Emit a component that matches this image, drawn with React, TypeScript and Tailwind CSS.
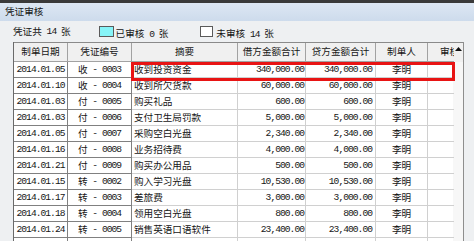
import React from "react";

const CJK = "font-['Noto_Sans_CJK_SC','Noto_Sans_CJK_JP',sans-serif] text-[9.6px]";
const MONO = "font-['Liberation_Mono',monospace] text-[9.6px] tracking-[-0.96px] whitespace-pre";

function T({ s }: { s: string }) {
  const parts = s.match(/[\u0000-\u00ff]+|[^\u0000-\u00ff]+/g) ?? [];
  return (
    <>
      {parts.map((p, i) =>
        /^[\u0000-\u00ff]/.test(p) ? (
          <span key={i} className={MONO}>
            {p}
          </span>
        ) : (
          <span key={i} className={CJK}>
            {p}
          </span>
        )
      )}
    </>
  );
}

type Row = [string, string, string, string, string, string];

const rows: Row[] = [
  ["2014.01.05", "收 - 0003", "收到投资资金", "340,000.00", "340,000.00", "李明"],
  ["2014.01.10", "收 - 0004", "收到所欠货款", "60,000.00", "60,000.00", "李明"],
  ["2014.01.03", "付 - 0005", "购买礼品", "600.00", "600.00", "李明"],
  ["2014.01.03", "付 - 0006", "支付卫生局罚款", "5,000.00", "5,000.00", "李明"],
  ["2014.01.05", "付 - 0007", "采购空白光盘", "2,340.00", "2,340.00", "李明"],
  ["2014.01.16", "付 - 0008", "业务招待费", "4,000.00", "4,000.00", "李明"],
  ["2014.01.21", "付 - 0009", "购买办公用品", "500.00", "500.00", "李明"],
  ["2014.01.15", "转 - 0002", "购入学习光盘", "10,530.00", "10,530.00", "李明"],
  ["2014.01.17", "转 - 0003", "差旅费", "3,000.00", "3,000.00", "李明"],
  ["2014.01.18", "转 - 0004", "领用空白光盘", "800.00", "800.00", "李明"],
  ["2014.01.24", "转 - 0005", "销售英语口语软件", "23,400.00", "23,400.00", "李明"],
  ["", "", "", "", "", ""],
];

const headers = ["制单日期", "凭证编号", "摘要", "借方金额合计", "贷方金额合计", "制单人"];
const widths = ["w-[54px]", "w-[64px]", "w-[106px]", "w-[68px]", "w-[70px]", "w-[52px]"];

export default function App() {
  return (
    <div className="w-[474px] h-[241px] overflow-hidden bg-[#eef0f2] text-[#161616] flex flex-col leading-none">
      {/* title bar */}
      <div className="h-[21px] shrink-0 border-t-[3px] border-[#3a3a3a] bg-gradient-to-b from-[#dde7f3] to-[#cddbec] flex items-center pl-[5px]">
        <T s="凭证审核" />
      </div>

      {/* info row */}
      <div className="h-[21px] shrink-0 flex items-center pl-[13px]">
        <T s="凭证共 14 张" />
        <div className="ml-[28px] w-[15px] h-[11px] bg-[#86f4f8] border border-[#5a5a5a]" />
        <div className="ml-[2px]">
          <T s="已审核 0 张" />
        </div>
        <div className="ml-[32px] w-[13px] h-[11px] bg-white border border-[#5a5a5a]" />
        <div className="ml-[3px]">
          <T s="未审核 14 张" />
        </div>
      </div>

      {/* table area */}
      <div className="flex pl-[13px]">
        <div className="relative w-[440px] border-l border-[#6a6a6a]">
          {/* header */}
          <div className="flex h-[20px] border-t border-[#8a8a8a]">
            {headers.map((h, i) => (
              <div
                key={i}
                className={`${widths[i]} shrink-0 h-full bg-[#f0f0f0] border-r border-b border-[#a2a2a2] flex items-center justify-center overflow-hidden whitespace-nowrap`}
              >
                <T s={h} />
              </div>
            ))}
            <div className="w-[26px] shrink-0 h-full bg-[#f0f0f0] border-b border-[#a2a2a2] flex items-center justify-start pl-[12px] overflow-hidden whitespace-nowrap">
              <T s="审核" />
            </div>
          </div>
          {/* rows */}
          {rows.map((r, ri) => (
            <div key={ri} className="flex h-[16px] bg-white">
              <div className="w-[54px] shrink-0 h-full border-r border-b border-[#808080] flex items-center justify-center">
                <T s={r[0]} />
              </div>
              <div className="w-[64px] shrink-0 h-full border-r border-b border-[#808080] flex items-center justify-center">
                <T s={r[1]} />
              </div>
              <div className="w-[106px] shrink-0 h-full border-r border-b border-[#d0d0d0] flex items-center pl-[2px] whitespace-nowrap overflow-hidden">
                <T s={r[2]} />
              </div>
              <div className="w-[68px] shrink-0 h-full border-r border-b border-[#d0d0d0] flex items-center justify-end pr-[1px]">
                <T s={r[3]} />
              </div>
              <div className="w-[70px] shrink-0 h-full border-r border-b border-[#d0d0d0] flex items-center justify-end pr-[3px]">
                <T s={r[4]} />
              </div>
              <div className="w-[52px] shrink-0 h-full border-r border-b border-[#d0d0d0] flex items-center justify-center">
                <T s={r[5]} />
              </div>
              <div className="w-[26px] shrink-0 h-full border-b border-[#d0d0d0]" />
            </div>
          ))}
          {/* red highlight */}
          <div className="absolute left-[117px] top-[20px] w-[324px] h-[19px] border-[3px] border-[#e81414]" />
        </div>

        {/* scrollbar */}
        <div className="w-[11px] shrink-0 flex flex-col border-r border-[#8e8e8e]">
          <div className="h-[20px] bg-[#f0f0f0] border-t border-[#8a8a8a] flex justify-center pt-[4px]">
            <svg width="7" height="4" viewBox="0 0 7 4">
              <polygon points="0,4 7,4 3.5,0" fill="#111" />
            </svg>
          </div>
          <div className="h-[200px] bg-[#f7f7f7]" />
        </div>
      </div>
    </div>
  );
}
